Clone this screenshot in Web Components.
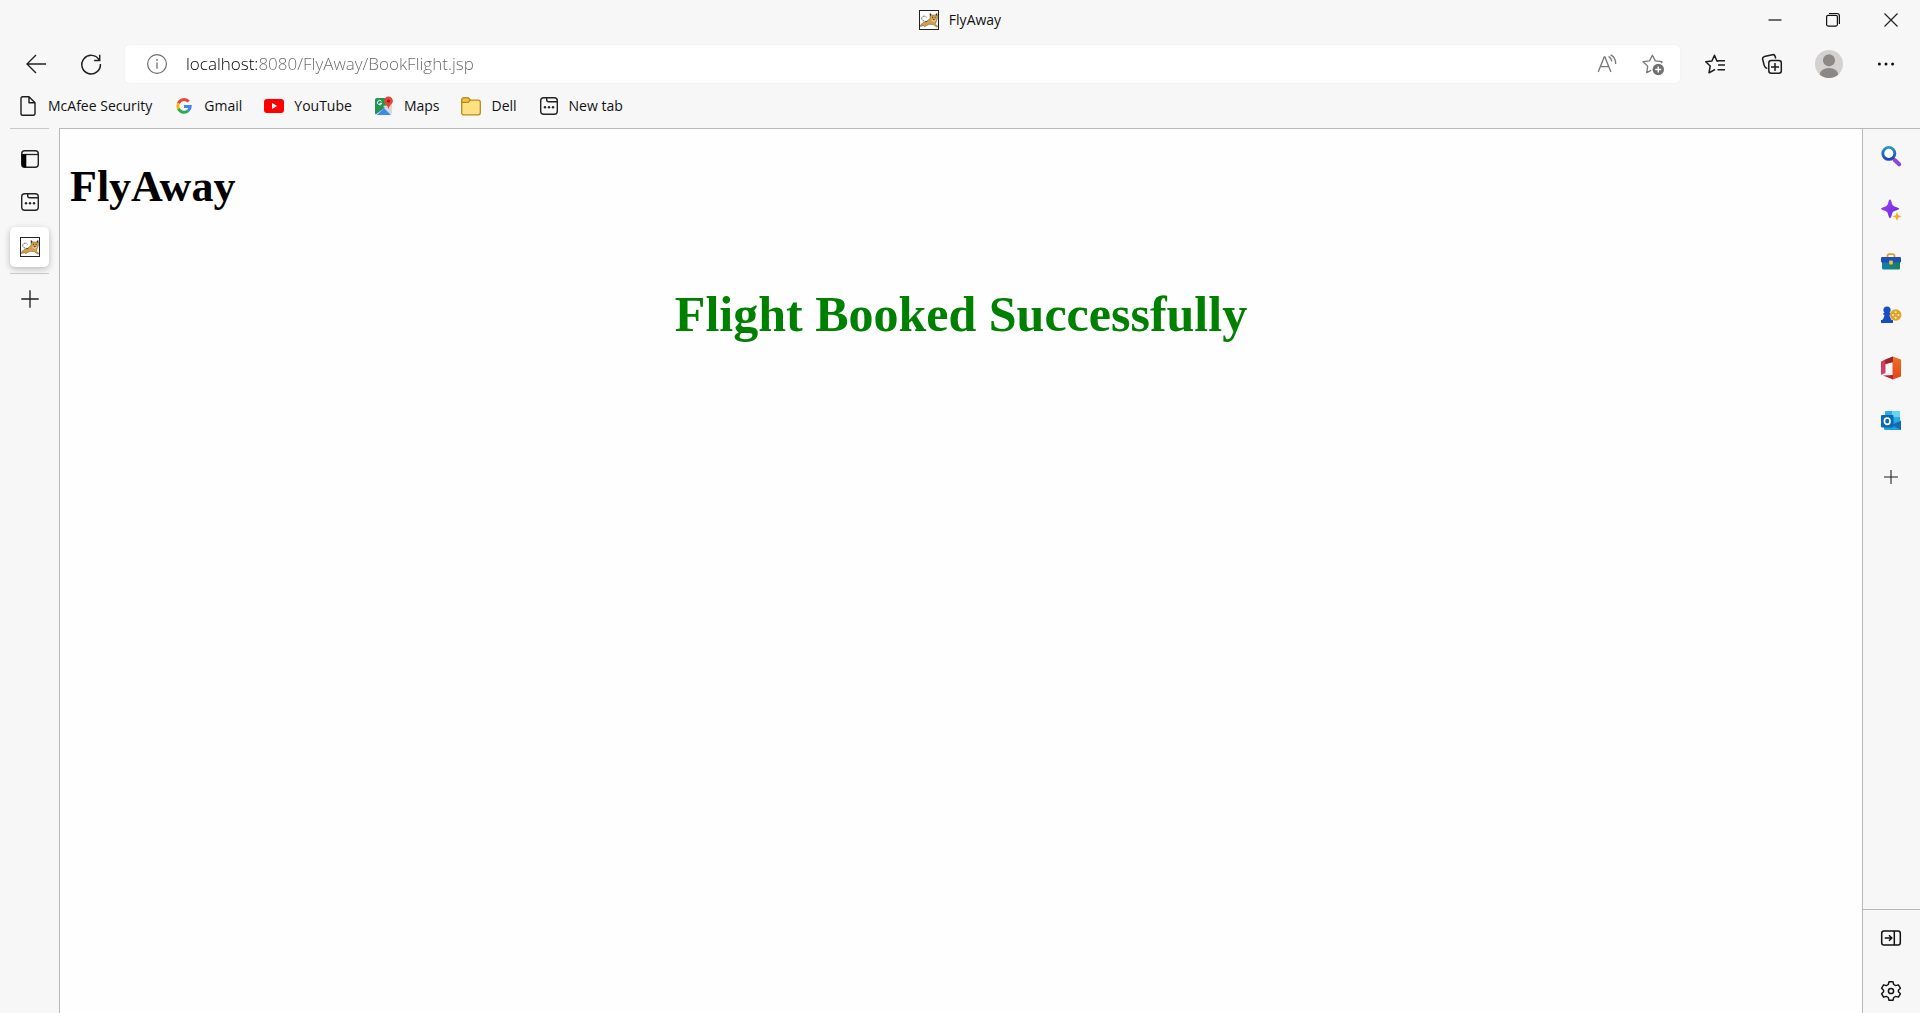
<!DOCTYPE html>
<html lang="en">
<head>
<meta charset="utf-8">
<title>FlyAway</title>
<style>
  html, body { height: 100%; margin: 0; }
  body { background: #f7f7f7; color: #111; font: 14px/20px "Open Sans", "Noto Sans", sans-serif; }
</style>
</head>
<body>
<browser-window>
  <title-bar slot="title">FlyAway</title-bar>
  <nav-bar slot="nav" address="localhost:8080/FlyAway/BookFlight.jsp"></nav-bar>
  <bookmarks-bar slot="bookmarks">
    <bookmark-link icon="doc">McAfee Security</bookmark-link>
    <bookmark-link icon="google">Gmail</bookmark-link>
    <bookmark-link icon="youtube">YouTube</bookmark-link>
    <bookmark-link icon="maps">Maps</bookmark-link>
    <bookmark-link icon="folder">Dell</bookmark-link>
    <bookmark-link icon="newtab">New tab</bookmark-link>
  </bookmarks-bar>
  <tab-rail slot="tabs"></tab-rail>
  <flight-page>
    <span slot="brand">FlyAway</span>
    <span slot="message">Flight Booked Successfully</span>
  </flight-page>
  <tool-rail slot="tools"></tool-rail>
</browser-window>

<script>
const ICONS = {
  back: '<path d="M20 10H1M10 1 1 10l9 9" fill="none" stroke="#222" stroke-width="1.4"/>',
  reload: '<path d="M18.3 6.2A9.3 9.3 0 1 0 19.4 10M18.7.8v5.6h-5.6" fill="none" stroke="#222" stroke-width="1.5"/>',
  info: '<circle cx="10" cy="10" r="9.4" fill="none" stroke="#6e6e6e" stroke-width="1.2"/><path d="M10 8.6v6.2" stroke="#6e6e6e" stroke-width="1.3"/><circle cx="10" cy="5.9" r=".9" fill="#6e6e6e"/>',
  aloud: '<path d="M1.2 18 7.2 3h.7l6 15M3.4 12.7h8.4M11.6 2.4c2.2 1.3 3 3 3.2 5M13.7.9c3.4 1.7 5 5 5 9" fill="none" stroke="#777" stroke-width="1.3"/>',
  addstar: '<path d="M19.3 9.3 20 7.7 13.3 6.9 10.4 1.2 7.5 6.9 1 7.7 5.7 12.1 4.7 18.6 9 16.4" fill="none" stroke="#777" stroke-width="1.3" stroke-linejoin="round"/><circle cx="16.3" cy="15.5" r="5.7" fill="#6f6f6f"/><path d="M16.3 12.5v6M13.3 15.5h6" stroke="#fff" stroke-width="1.4"/>',
  favorites: '<path d="M13.5 7.3 11.9 7 9.5 1.2 6.9 7 .7 7.7 5.2 12 4 18.8l6-3.3M12.5 6.8H20M13 11h7M12.5 15.7H20" fill="none" stroke="#1c1c1c" stroke-width="1.5" stroke-linejoin="round"/>',
  collections: '<path d="M5.3 14.5C2.8 14 2.6 13 2.2 11.3L.7 5.5C.3 4 1 3 2.4 2.6L10.3.7c1.5-.3 2.5.3 2.9 1.8l.5 2" fill="none" stroke="#1c1c1c" stroke-width="1.5"/><rect x="6.8" y="6.6" width="12.5" height="12.7" rx="2.5" fill="none" stroke="#1c1c1c" stroke-width="1.5"/><path d="M13 9v8M9 13h8" stroke="#1c1c1c" stroke-width="1.5"/>',
  profile: '<clipPath id="c"><circle cx="10" cy="10" r="10"/></clipPath><circle cx="10" cy="10" r="10" fill="#d4d2d0"/><g clip-path="url(#c)" fill="#8b8886"><circle cx="10" cy="7.4" r="4.3"/><ellipse cx="10" cy="18" rx="6.8" ry="5.2"/></g>',
  more: '<g fill="#111"><circle cx="3.4" cy="10" r="1.5"/><circle cx="10" cy="10" r="1.5"/><circle cx="16.6" cy="10" r="1.5"/></g>',
  minimize: '<path d="M3.5 10h13" stroke="#111" stroke-width="1.2"/>',
  restore: '<rect x="3.6" y="5.3" width="10.8" height="10.8" rx="1.5" fill="none" stroke="#111" stroke-width="1.2"/><path d="M6 3.5h8a2.4 2.4 0 0 1 2.4 2.4V14" fill="none" stroke="#111" stroke-width="1.2"/>',
  close: '<path d="m3.5 3.5 13 13M16.5 3.5l-13 13" stroke="#222" stroke-width="1.2"/>',
  doc: '<path d="M3 2.5A1.8 1.8 0 0 1 4.8.7H11L17 6.7v11A1.8 1.8 0 0 1 15.2 19.3H4.8A1.8 1.8 0 0 1 3 17.5ZM11 .7v6h6" fill="none" stroke="#1c1c1c" stroke-width="1.4" stroke-linejoin="round"/>',
  google: '<g fill="none" stroke-width="3"><path d="M14.7 5.6A6.2 6.2 0 0 0 4.4 7.3" stroke="#ea4335"/><path d="M4.4 7.3a6.2 6.2 0 0 0 0 5.4" stroke="#fbbc05"/><path d="M4.4 12.7a6.2 6.2 0 0 0 9.8 2" stroke="#34a853"/><path d="M14.2 14.7a6 6 0 0 0 2-4.3H10" stroke="#4285f4"/></g>',
  youtube: '<rect y="3" width="20" height="14" rx="3" fill="#f00"/><path d="M8 7v6l5.2-3Z" fill="#fff"/>',
  maps: '<clipPath id="m"><rect x="1" y="2" width="17" height="17" rx="2"/></clipPath><g clip-path="url(#m)"><path d="M0 0h20v20H0Z" fill="#dfe4e8"/><path d="M0 1h13v9L1 19Z" fill="#219653"/><path d="m2 20 8-8 8 8Z" fill="#4285f4"/><path d="m9 10 10 10V8Z" fill="#d5d9dc"/><path d="M7.5 5.3a2.2 2.2 0 1 0 .3 2H5.5" fill="none" stroke="#fff" stroke-width="1"/></g><path d="M14.5.5a4.4 4.4 0 0 0-4.4 4.4c0 3 3.9 4.2 4.4 8.3.5-4.1 4.4-5.3 4.4-8.3A4.4 4.4 0 0 0 14.500.5Z" fill="#e94335"/><circle cx="14.5" cy="5" r="1.6" fill="#8c1d18"/>',
  folder: '<path d="M.7 4A2 2 0 0 1 2.7 2h4.600l2 2.2h8a2 2 0 0 1 2 2V16.8a2 2 0 0 1-2 2H2.7a2 2 0 0 1-2-2Z" fill="#ffe082" stroke="#b58a1b" stroke-width="1.3"/><path d="M.7 6.3h6.5l2.1-2-2-2.3H2.7a2 2 0 0 0-2 2Z" fill="#f8c636" stroke="#b58a1b" stroke-width="1.2"/>',
  newtab: '<rect x="1.7" y="1.7" width="16.6" height="16.6" rx="3" fill="none" stroke="#222" stroke-width="1.4"/><path d="M7.7 1.7v2a2 2 0 0 0 2 2h8.6" fill="none" stroke="#222" stroke-width="1.4"/><g fill="#222"><circle cx="6" cy="11.3" r="1.2"/><circle cx="10" cy="11.3" r="1.2"/><circle cx="14" cy="11.3" r="1.2"/></g>',
  panel: '<rect x="1.7" y="1.7" width="16.6" height="16.6" rx="3" fill="none" stroke="#222" stroke-width="1.4"/><path d="M1.7 5.5h16.6" stroke="#222" stroke-width="1.3"/><path d="M1.7 5.5H6.3v12.8H4a2.3 2.3 0 0 1-2.3-2.3Z" fill="#000"/>',
  tomcat: '<rect x=".5" y=".5" width="19" height="19" fill="#fff" stroke="#222"/><path d="M1 16.5c1.2-3 3.5-4.6 6.5-5.2L11 8.5V3.3L12.7 5h3.6L18 3.3l.5 5-1.5 3.6-.8 2L19 16.6 17.6 17l-3.4-2.4-4.2-.3-4.6 2.4-.8-1Z" fill="#d1a04f" stroke="#6b5427" stroke-width=".5"/><path d="m11 3.3 1.3 1.8L11 6.3M18 3.3l-1.2 1.6L18.3 6" fill="#222"/><path d="M8.3 11.6C4 11.5 1.8 9.3 3 7.3 4.2 5.6 6.5 6 7.5 7.3" fill="none" stroke="#444" stroke-width=".9" stroke-dasharray="2 1"/><path d="M13 7.3h1M15.7 7.3h1M14.2 9.5h1.3" stroke="#333"/><path d="m12.5 10 2 1.5L17 10" fill="none" stroke="#f5dfb0"/>',
  plus: '<path d="M10 1.3v17.4M1.3 10h17.4" stroke="#1c1c1c" stroke-width="1.3"/>',
  search: '<linearGradient id="s" x2="0" y2="1"><stop stop-color="#2797c9"/><stop offset="1" stop-color="#1e45b8"/></linearGradient><path d="m13.6 14 4.6 4.3" stroke="#8848dc" stroke-width="4" stroke-linecap="round"/><circle cx="7.8" cy="7.4" r="6" fill="#fff" stroke="url(#s)" stroke-width="2.9"/>',
  spark: '<linearGradient id="p" x2="1" y2="1"><stop stop-color="#a745f5"/><stop offset="1" stop-color="#5c2be3"/></linearGradient><path d="M9 .5c1 0 1.5 2.2 2 4s1.3 2.6 3.2 3.2c2 .6 4 1.2 4 2s-2 1.5-4 2-2.6 1.3-3.2 3.3c-.5 2-1 4-2 4s-1.5-2-2-4c-.5-1.9-1.3-2.7-3.2-3.3-2-.5-3.8-1.2-3.8-2s1.8-1.4 3.8-2C5.7 7.1 6.5 6.3 7 4.5s1-4 2-4Z" fill="url(#p)"/><path d="m16 13 1.3 3.3 3.2 1.2-3.2 1.3L16 22l-1.3-3.2-3.2-1.3 3.2-1.2Z" fill="#eeb11c"/>',
  tools: '<path d="M6.5 6V4a1.8 1.8 0 0 1 1.8-1.8h3.4A1.8 1.8 0 0 1 13.5 4v2" fill="none" stroke="#d9a21a" stroke-width="1.8"/><linearGradient id="t"><stop stop-color="#167db0"/><stop offset="1" stop-color="#168456"/></linearGradient><rect x="1" y="8" width="18" height="9.5" rx="1.5" fill="url(#t)"/><rect y="5" width="20" height="5.5" rx="1.3" fill="#1d4fbd"/><rect x="8.2" y="8.5" width="3.6" height="4" rx=".7" fill="#f5c431"/>',
  games: '<g fill="#1c4cc4"><circle cx="6" cy="5" r="3.6"/><path d="M2.3 8h7.4v1.7H8.6c0 3 1.7 4 2.6 6H.9c.9-2 2.5-3 2.5-6H2.3ZM0 15h12v3H0Z"/></g><circle cx="14.7" cy="10" r="5.7" fill="#e5a323"/><g fill="#fff5cf"><circle cx="14.7" cy="7.3" r="1"/><circle cx="14.7" cy="12.7" r="1"/><circle cx="12" cy="10" r="1"/><circle cx="17.4" cy="10" r="1"/></g>',
  office: '<linearGradient id="o" x2="0" y2="1"><stop stop-color="#d03c35"/><stop offset="1" stop-color="#d43c82"/></linearGradient><linearGradient id="q" x2="0" y2="1"><stop stop-color="#f07020"/><stop offset="1" stop-color="#e0431c"/></linearGradient><path d="M11.500-1.500 0 3.500V17l4.500-2V6l8-2Z" fill="url(#o)"/><path d="m11.500-1.500 8.500 3v17l-8.500 3Z" fill="url(#q)"/><path d="m2 17.500 10-.5v4.500Z" fill="#bc2034"/><path d="M12-1.500V4L4.500 6 3.500 2Z" fill="#9d2430"/>',
  outlook: '<rect x="4" width="15" height="13" rx="1" fill="#2dabe8"/><path d="M11 0h8v6h-8Z" fill="#66d4f5"/><path d="M3 11h17v8H4a1 1 0 0 1-1-1Z" fill="#209fdc"/><path d="m11 14 9-4.5V19Z" fill="#1569b0"/><rect y="4" width="12.5" height="12.5" rx="1" fill="#0d68b4"/><ellipse cx="6.2" cy="10.2" rx="2.8" ry="3.2" fill="none" stroke="#fff" stroke-width="1.7"/>',
  hide: '<rect x=".7" y="3" width="18.6" height="14" rx="2.3" fill="none" stroke="#111" stroke-width="1.5"/><path d="M13.3 3v14M3.7 10h7M8 7.2l2.8 2.8L8 12.8" fill="none" stroke="#111" stroke-width="1.5"/>',
  settings: '<path d="M8 .8h4l.7 2.7 2 1.1 2.7-.8 2 3.4-2 2v1.6l2 2-2 3.4-2.7-.8-2 1.1-.7 2.7H8l-.7-2.7-2-1.1-2.7.8-2-3.4 2-2V9.2l-2-2 2-3.4 2.7.8 2-1.1Z" fill="none" stroke="#111" stroke-width="1.4" stroke-linejoin="round"/><circle cx="10" cy="10" r="2.6" fill="none" stroke="#111" stroke-width="1.5"/>'
};

const define = (name, html, setup) => customElements.define(name, class extends HTMLElement {
  constructor() {
    super();
    this.attachShadow({ mode: 'open' }).innerHTML = html;
  }
  connectedCallback() { if (setup) setup(this, this.shadowRoot); }
});

define('ui-icon', `<style>
  :host { display: block; flex: none; width: 20px; height: 20px; }
  svg { display: block; width: 100%; height: 100%; overflow: visible; }
</style><svg viewBox="0 0 20 20" aria-hidden="true"></svg>`,
  (el, root) => { root.querySelector('svg').innerHTML = ICONS[el.getAttribute('name')] || ''; });

const BUTTON = `button { display: flex; align-items: center; justify-content: center; flex: none;
  margin: 0; padding: 0; border: 0; background: none; color: inherit; font: inherit; }`;
const button = (icon, label, cls = '') =>
  `<button type="button" class="${cls}" aria-label="${label}"><ui-icon name="${icon}"></ui-icon></button>`;

define('browser-window', `<style>
  :host { display: flex; flex-direction: column; min-height: 100vh; }
  main { flex: 1; display: flex; }
  slot:not([name])::slotted(*) { flex: 1; }
</style>
<slot name="title"></slot><slot name="nav"></slot><slot name="bookmarks"></slot>
<main><slot name="tabs"></slot><slot></slot><slot name="tools"></slot></main>`);

define('title-bar', `<style>
  :host { display: grid; grid-template-columns: 1fr auto 1fr; align-items: center; height: 40px; }
  .name { grid-column: 2; display: flex; align-items: center; gap: 10px; }
  .controls { display: flex; justify-content: flex-end; }
  ${BUTTON} button { width: 58px; height: 40px; }
</style>
<div class="name"><ui-icon name="tomcat"></ui-icon><span><slot></slot></span></div>
<div class="controls">${button('minimize', 'Minimize')}${button('restore', 'Restore')}${button('close', 'Close')}</div>`);

define('nav-bar', `<style>
  :host { display: flex; align-items: center; height: 48px; padding: 0 6px 0 8px; }
  ${BUTTON} button { width: 57px; height: 38px; }
  button.go { width: 55px; }
  form { flex: 1; display: flex; align-items: center; height: 38px; margin: 0 6px 0 7px; padding: 0 6px 0 22px;
    background: #fff; border-radius: 5px; box-shadow: 0 0 3px #0000000d; }
  input { flex: 1; min-width: 0; height: 30px; margin: 0 0 0 19px; padding: 0; border: 0; outline: 0;
    font: 350 17px/30px "Open Sans", "Noto Sans", sans-serif;
    color: transparent; background: linear-gradient(90deg, #000 72px, #666 72px) text; }
  form button { width: 45px; }
  .profile ui-icon { width: 28px; height: 28px; }
</style>
${button('back', 'Back', 'go')}${button('reload', 'Refresh', 'go')}
<form><ui-icon name="info"></ui-icon><input type="text" aria-label="Address" spellcheck="false">
${button('aloud', 'Read aloud')}${button('addstar', 'Add to favorites')}</form>
${button('favorites', 'Favorites')}${button('collections', 'Collections')}${button('profile', 'Profile', 'profile')}${button('more', 'Settings and more')}`,
  (el, root) => { root.querySelector('input').value = el.getAttribute('address'); });

define('bookmarks-bar', `<style>
  :host { display: flex; align-items: center; gap: 22px; height: 36px; padding: 0 18px 4px; }
</style><slot></slot>`);

define('bookmark-link', `<style>
  :host { display: block; }
  a { display: flex; align-items: center; gap: 10px; color: inherit; text-decoration: none; white-space: nowrap; }
</style><a href="#"><ui-icon></ui-icon><span><slot></slot></span></a>`,
  (el, root) => {
    const icon = document.createElement('ui-icon');
    icon.setAttribute('name', el.getAttribute('icon'));
    root.querySelector('ui-icon').replaceWith(icon);
  });

define('tab-rail', `<style>
  :host { display: flex; flex-direction: column; align-items: center; width: 59px; }
  hr { width: 39px; height: 1px; margin: 0; border: 0; background: #c8c8c8; }
  ${BUTTON} button { width: 39px; height: 43px; }
  .panel { margin-top: 8px; }
  .active { height: 40px; margin: 4px 0 6px; background: #fff; border-radius: 5px; box-shadow: 0 2px 6px #00000040; }
  .new { height: 49px; }
</style>
<hr>${button('panel', 'Tab actions', 'panel')}${button('newtab', 'New tab')}${button('tomcat', 'FlyAway', 'active')}
<hr>${button('plus', 'Open new tab', 'new')}`);

define('flight-page', `<style>
  :host { display: block; padding: 30px 10px; background: #fefefe; color: #000;
    border: 1px solid #b8b8b8; border-width: 1px 1px 0; font-family: "Liberation Serif", serif; }
  h1 { margin: 0; font-size: 44px; line-height: 56px; }
  h2 { margin: 69px 0 0; font-size: 50px; line-height: 60px; text-align: center; color: green; }
</style>
<h1><slot name="brand"></slot></h1><h2><slot name="message"></slot></h2>`);

define('tool-rail', `<style>
  :host { display: flex; flex-direction: column; width: 57px; border-top: 1px solid #b8b8b8; }
  ${BUTTON} button { width: 56px; height: 53px; }
  .add { margin-top: 3px; }
  .add ui-icon { width: 16px; height: 16px; }
  footer { margin-top: auto; border-top: 1px solid #b8b8b8; }
  footer button { height: 56px; }
  .settings { height: 47px; padding-top: 2px; }
</style>
${button('search', 'Search')}${button('spark', 'Discover')}${button('tools', 'Tools')}${button('games', 'Games')}${button('office', 'Office')}${button('outlook', 'Outlook')}${button('plus', 'Customize sidebar', 'add')}
<footer>${button('hide', 'Hide sidebar')}${button('settings', 'Settings', 'settings')}</footer>`);
</script>
</body>
</html>
